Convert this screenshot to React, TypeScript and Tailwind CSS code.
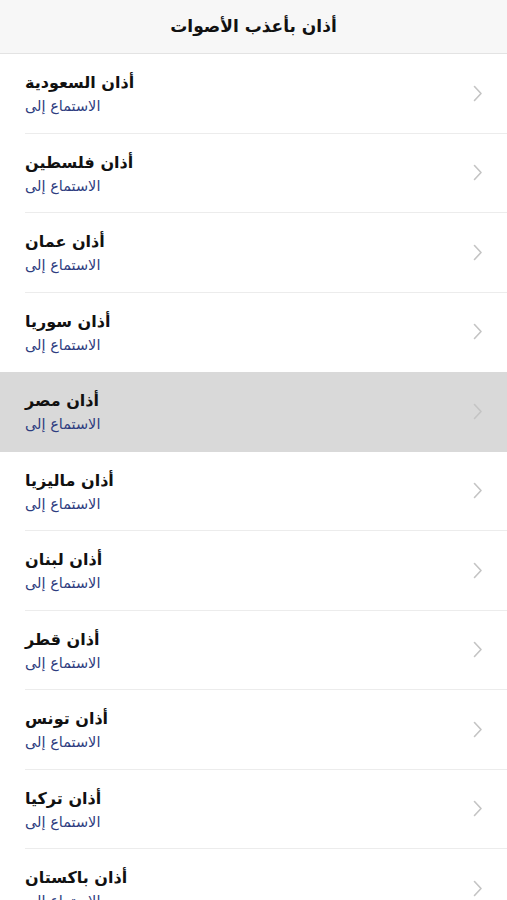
const countries = [
  'السعودية',
  'فلسطين',
  'عمان',
  'سوريا',
  'مصر',
  'ماليزيا',
  'لبنان',
  'قطر',
  'تونس',
  'تركيا',
  'باكستان',
];

function Chevron() {
  return (
    <svg width="10" height="17" viewBox="0 0 10 17" fill="none" className="text-[#c4c4c4]">
      <path d="M1.5 1.5L8 8.5L1.5 15.5" stroke="currentColor" strokeWidth="1.6" strokeLinecap="round" strokeLinejoin="round" />
    </svg>
  );
}

export default function App() {
  const selected = 'مصر';
  return (
    <div className="w-[507px] h-[900px] overflow-hidden bg-white font-['DejaVu_Sans','Noto_Sans',sans-serif]">
      {/* Nav bar */}
      <div className="h-[54px] bg-[#f7f7f7] border-b border-[#e3e3e3] flex items-center justify-center">
        <span dir="rtl" className="text-[17px] font-bold text-[#111]">أذان بأعذب الأصوات</span>
      </div>

      {/* List */}
      <div>
        {countries.map((c, i) => (
          <div key={c} className={c === selected ? 'bg-[#d9d9d9]' : ''}>
            <div className="h-[78.5px] flex items-center pl-[25px] pr-[24px]">
              <div className="flex-1 flex flex-col items-start pt-[2px]">
                <span dir="rtl" className="text-[16px] font-bold text-[#111] leading-[24px]">أذان {c}</span>
                <span dir="rtl" className="text-[14.5px] text-[#2e3d80] leading-[22px]">الاستماع إلى</span>
              </div>
              <Chevron />
            </div>
            {i < countries.length - 1 && (
              <div className={c === selected || countries[i + 1] === selected ? 'h-px' : 'ml-[25px] h-px bg-[#ececec]'} />
            )}
          </div>
        ))}
      </div>
    </div>
  );
}
